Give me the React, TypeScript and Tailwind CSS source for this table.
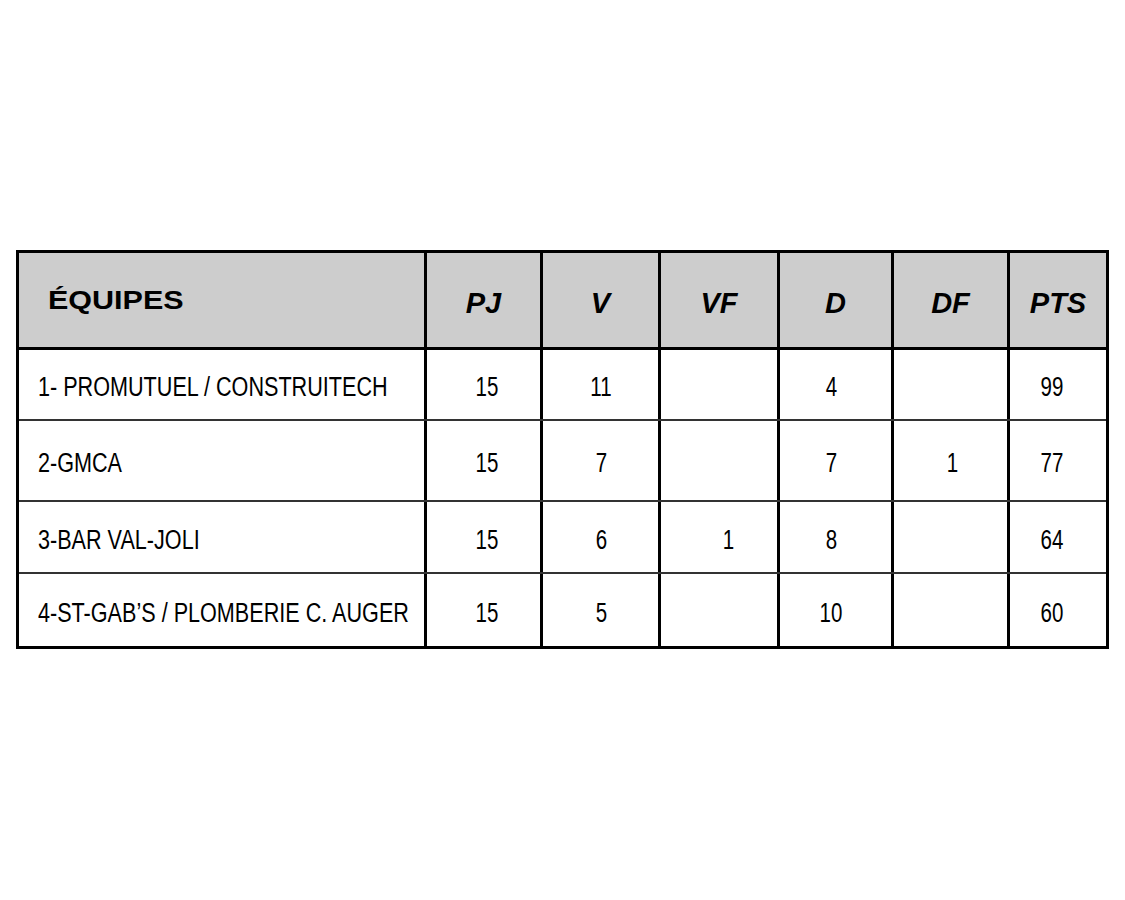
const headers = ["PJ", "V", "VF", "D", "DF", "PTS"];

// small per-column nudges so the figures sit where the source puts them
const numPad = ["pl-[8px]", "pl-[2px]", "pl-[20px]", "pr-[8px]", "pl-[4px]", "pr-[12px]"];

const rows = [
  { team: "1- PROMUTUEL / CONSTRUITECH", stats: ["15", "11", "", "4", "", "99"], h: "h-[69px]" },
  { team: "2-GMCA", stats: ["15", "7", "", "7", "1", "77"], h: "h-[79px]" },
  { team: "3-BAR VAL-JOLI", stats: ["15", "6", "1", "8", "", "64"], h: "h-[70px]" },
  { team: "4-ST-GAB’S / PLOMBERIE C. AUGER", stats: ["15", "5", "", "10", "", "60"], h: "h-[72px]" },
];

const grid = "grid grid-cols-[405px_116px_118px_119px_114px_116px_99px]";

export default function App() {
  return (
    <div className="w-[1125px] h-[900px] bg-white pt-[250px] pl-[16px] font-['Liberation_Sans',Arial,sans-serif] text-black">
      <div className="w-[1093px] border-[3px] border-black">
        {/* header */}
        <div className={`${grid} h-[97px] bg-[#cdcdcd] border-b-[3px] border-black`}>
          <div className="flex items-center pl-[29px]">
            <span className="inline-block origin-left scale-x-[1.22] text-[25px] font-bold leading-none">
              ÉQUIPES
            </span>
          </div>
          {headers.map((h) => (
            <div
              key={h}
              className="flex items-center justify-center border-l-[3px] border-black pt-[7px] text-[29px] font-bold italic leading-none"
            >
              {h}
            </div>
          ))}
        </div>

        {/* rows */}
        {rows.map((r, i) => (
          <div
            key={r.team}
            className={`${grid} ${r.h} ${i < rows.length - 1 ? "box-content border-b-2 border-[#333]" : ""} text-[27px] leading-none`}
          >
            <div className="flex items-center pl-[19px] pt-[6px] whitespace-nowrap">
              <span className="inline-block origin-left scale-x-[0.8]">{r.team}</span>
            </div>
            {r.stats.map((s, j) => (
              <div
                key={j}
                className={`flex items-center justify-center border-l-[3px] border-black pt-[6px] ${numPad[j]}`}
              >
                <span className="inline-block scale-x-[0.76]">{s}</span>
              </div>
            ))}
          </div>
        ))}
      </div>
    </div>
  );
}
